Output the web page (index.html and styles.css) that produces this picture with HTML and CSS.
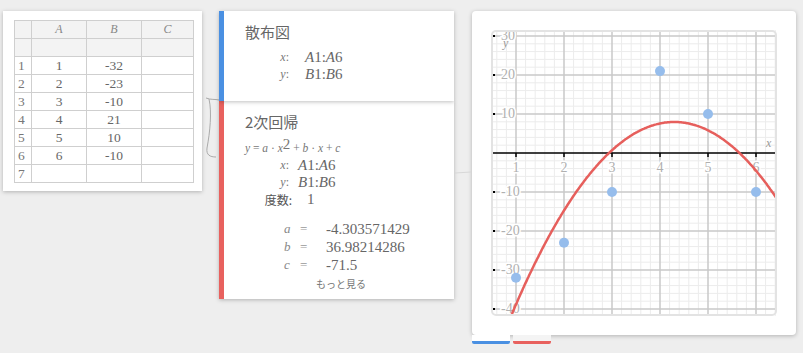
FILE: index.html
```html
<!DOCTYPE html>
<html lang="ja">
<head>
    <meta charset="UTF-8">
    <title>2次回帰</title>
    <link rel="stylesheet" href="styles.css">
</head>
<body>
    <div class="page">
        <div class="sheet">
            <table class="grid">
                <tr class="head"><th></th><th><i>A</i></th><th><i>B</i></th><th><i>C</i></th></tr>
                <tr class="head"><th></th><th></th><th></th><th></th></tr>
                <tr><td class="num">1</td><td>1</td><td>-32</td><td></td></tr>
                <tr><td class="num">2</td><td>2</td><td>-23</td><td></td></tr>
                <tr><td class="num">3</td><td>3</td><td>-10</td><td></td></tr>
                <tr><td class="num">4</td><td>4</td><td>21</td><td></td></tr>
                <tr><td class="num">5</td><td>5</td><td>10</td><td></td></tr>
                <tr><td class="num">6</td><td>6</td><td>-10</td><td></td></tr>
                <tr><td class="num">7</td><td></td><td></td><td></td></tr>
            </table>
        </div>

        <div class="cards">
            <div class="card scatter">
                <div class="title">散布図</div>
                <div class="vars">
                    <span class="lbl"><i>x</i>:</span><span class="val"><i>A</i>1:<i>A</i>6</span>
                    <span class="lbl"><i>y</i>:</span><span class="val"><i>B</i>1:<i>B</i>6</span>
                </div>
            </div>
            <div class="card regress">
                <div class="title">2次回帰</div>
                <div class="formula"><i>y</i> = <i>a</i> · <i>x</i><sup>2</sup> + <i>b</i> · <i>x</i> + <i>c</i></div>
                <div class="vars">
                    <span class="lbl"><i>x</i>:</span><span class="val"><i>A</i>1:<i>A</i>6</span>
                    <span class="lbl"><i>y</i>:</span><span class="val"><i>B</i>1:<i>B</i>6</span>
                    <span class="lbl jp">度数:</span><span class="val deg">1</span>
                </div>
                <div class="coefs">
                    <span class="lbl"><i>a</i></span><span class="eq">=</span><span class="val">-4.303571429</span>
                    <span class="lbl"><i>b</i></span><span class="eq">=</span><span class="val">36.98214286</span>
                    <span class="lbl"><i>c</i></span><span class="eq">=</span><span class="val">-71.5</span>
                </div>
                <div class="more">もっと見る</div>
            </div>
        </div>

        <div class="graph">
            <div class="graph-card">
                <svg id="plot" width="286" height="286"></svg>
            </div>
            <div class="tabs">
                <div class="tab blue"></div>
                <div class="tab red"></div>
            </div>
        </div>
    </div>

    <!-- connectors between the boxes -->
    <svg class="links" width="803" height="353">
        <path d="M206 98 C211 100 215 99 219 100 M209 99 C212 112 210 132 207 148 C206 155 210 157 216 157" />
        <path d="M455 173 L471 172" class="faint" />
    </svg>

    <script>
        function drawPlot() {
            const svg = document.getElementById('plot');
            const ns = 'http://www.w3.org/2000/svg';
            const W = 286, H = 286;
            const X = x => 48 * x - 23;
            const Y = y => 123 - 3.9 * y;

            function add(tag, attrs) {
                const el = document.createElementNS(ns, tag);
                for (const k in attrs) el.setAttribute(k, attrs[k]);
                svg.appendChild(el);
                return el;
            }

            add('rect', { x: 0, y: 0, width: W, height: H, fill: '#fff' });

            // minor grid
            for (let i = 0; i <= 35; i++) {
                const px = X(i * 0.2);
                if (px > 0 && px < W && i % 5) add('line', { x1: px, y1: 0, x2: px, y2: H, class: 'minor' });
            }
            for (let j = -25; j <= 20; j++) {
                const py = Y(j * 2);
                if (py > 0 && py < H && j % 5) add('line', { x1: 0, y1: py, x2: W, y2: py, class: 'minor' });
            }

            // major grid
            for (let x = 1; x <= 6; x++) {
                add('line', { x1: X(x), y1: 0, x2: X(x), y2: H, class: 'major' });
            }
            for (let y = -40; y <= 30; y += 10) {
                if (y === 0) continue;
                add('line', { x1: 0, y1: Y(y), x2: W, y2: Y(y), class: 'major' });
            }

            // x axis + ticks
            add('line', { x1: 0, y1: Y(0), x2: W, y2: Y(0), class: 'axis' });
            for (let x = 1; x <= 6; x++) {
                add('line', { x1: X(x), y1: Y(0), x2: X(x), y2: Y(0) + 4, class: 'axis' });
                const t = add('text', { x: X(x), y: Y(0) + 19, class: 'tick-lbl', 'text-anchor': 'middle' });
                t.textContent = x;
            }
            for (let y = -40; y <= 30; y += 10) {
                if (y === 0) continue;
                add('rect', { x: 0, y: Y(y) - 1, width: 4, height: 2, fill: '#000' });
                const t = add('text', { x: 10, y: Y(y) + 4, class: 'tick-lbl' });
                t.textContent = y;
            }

            const xl = add('text', { x: 275, y: 117, class: 'axis-name' });
            xl.textContent = 'x';
            const yl = add('text', { x: 12, y: 17, class: 'axis-name' });
            yl.textContent = 'y';

            // regression curve
            const a = -4.303571429, b = 36.98214286, c = -71.5;
            let pts = [];
            for (let x = 0.4; x <= 6.5; x += 0.02) {
                pts.push(X(x).toFixed(1) + ',' + Y(a * x * x + b * x + c).toFixed(1));
            }
            add('polyline', { points: pts.join(' '), class: 'curve' });

            // data points
            const data = [[1, -32], [2, -23], [3, -10], [4, 21], [5, 10], [6, -10]];
            data.forEach(p => add('circle', { cx: X(p[0]), cy: Y(p[1]), r: 5, class: 'dot' }));

            add('rect', { x: 1, y: 1, width: W - 2, height: H - 2, rx: 4, class: 'frame' });
        }

        window.onload = drawPlot;
    </script>
</body>
</html>
```

FILE: styles.css
```css
body {
    margin: 0;
    background-color: #eeeeee;
    font-family: "Liberation Serif", serif;
    color: #555;
}
.page {
    display: flex;
    align-items: flex-start;
    padding: 11px 0 0 3px;
}
.sheet {
    width: 199px;
    height: 180px;
    box-sizing: border-box;
    padding: 9px 8px 0 11px;
    background: #fff;
    box-shadow: 0 1px 4px rgba(0, 0, 0, 0.25);
    margin-right: 17px;
}
.grid {
    border-collapse: collapse;
    table-layout: fixed;
    width: 180px;
    font-size: 13.5px;
    color: #666;
}
.grid th, .grid td {
    border: 1px solid #cfcfcf;
    height: 17px;
    padding: 0;
    text-align: center;
    font-weight: normal;
}
.grid th:nth-child(1) { width: 16px; }
.grid th:nth-child(2) { width: 54px; }
.grid th:nth-child(3) { width: 54px; }
.grid .head th {
    background: #f3f3f3;
    font-size: 12px;
    color: #888;
}
.grid td.num {
    text-align: left;
    padding-left: 3px;
    color: #777;
}
.cards {
    width: 235px;
    margin-right: 18px;
}
.card {
    position: relative;
    background: #fff;
    box-sizing: border-box;
    padding: 11px 0 0 21px;
    box-shadow: 0 1px 4px rgba(0, 0, 0, 0.25);
}
.scatter {
    height: 90px;
    border-left: 5px solid #4a90e2;
    z-index: 2;
}
.regress {
    height: 198px;
    border-left: 5px solid #e8615e;
}
.title {
    font-family: "Noto Sans CJK JP", sans-serif;
    font-size: 15px;
    line-height: 20px;
    color: #666;
}
.vars {
    display: grid;
    grid-template-columns: 44px auto;
    column-gap: 16px;
    line-height: 17px;
    margin-top: 7px;
}
.vars .lbl {
    text-align: right;
    font-size: 12px;
    color: #777;
}
.vars .val {
    font-size: 15px;
    color: #666;
}
.regress .vars {
    column-gap: 9px;
    margin-top: 0;
}
.regress .vars .jp {
    font-family: "Noto Sans CJK JP", sans-serif;
    font-size: 12px;
    color: #555;
    margin-right: -3px;
}
.regress .vars .deg {
    padding-left: 9px;
}
.formula {
    margin: 7px 0 0 0;
    font-size: 11.5px;
    line-height: 18px;
    height: 18px;
    color: #777;
}
.formula sup {
    font-size: 15px;
    vertical-align: 3px;
    line-height: 0;
}
.coefs {
    display: grid;
    grid-template-columns: 16px 26px auto;
    margin: 12px 0 0 39px;
    line-height: 18px;
}
.coefs .lbl {
    font-size: 13px;
    color: #888;
}
.coefs .eq {
    font-size: 13px;
    color: #999;
}
.coefs .val {
    font-size: 15px;
    color: #666;
}
.more {
    font-family: "Noto Sans CJK JP", sans-serif;
    font-size: 10px;
    color: #777;
    margin: 1px 0 0 71px;
    line-height: 18px;
}
.graph-card {
    width: 324px;
    height: 324px;
    box-sizing: border-box;
    padding: 19px;
    background: #fff;
    border-radius: 4px;
    box-shadow: 0 1px 4px rgba(0, 0, 0, 0.25);
}
#plot {
    display: block;
}
#plot .minor { stroke: #ececec; stroke-width: 1; }
#plot .major { stroke: #c9c9c9; stroke-width: 1.5; }
#plot .axis { stroke: #000; stroke-width: 1.5; }
#plot .curve { fill: none; stroke: #e65f5c; stroke-width: 2.5; }
#plot .dot { fill: #96bdec; }
#plot .frame { fill: none; stroke: #e3e3e3; stroke-width: 2; }
#plot .tick-lbl {
    font-family: "Liberation Serif", serif;
    font-size: 14px;
    fill: #b0b0b0;
    stroke: #fff;
    stroke-width: 3px;
    paint-order: stroke;
}
#plot .axis-name {
    font-family: "Liberation Serif", serif;
    font-style: italic;
    font-size: 12px;
    fill: #999;
}
.tabs {
    display: flex;
    gap: 3px;
}
.tab {
    width: 38px;
    height: 6px;
    border-bottom: 3px solid;
    border-radius: 0 0 2px 2px;
}
.tab.blue {
    background: #fff;
    border-color: #4a90e2;
}
.tab.red {
    background: #f4f4f4;
    border-color: #e8615e;
}
.links {
    position: absolute;
    left: 0;
    top: 0;
    pointer-events: none;
}
.links path {
    fill: none;
    stroke: #aaa;
    stroke-width: 1;
}
.links path.faint {
    stroke: #d8d8d8;
}
```
